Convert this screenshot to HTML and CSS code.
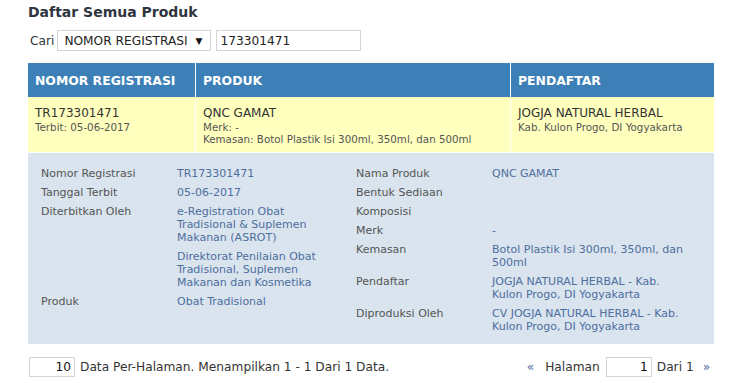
FILE: index.html
```html
<!DOCTYPE html>
<html>
<head>
<meta charset="utf-8">
<link rel="stylesheet" href="styles.css">
</head>
<body>
<div class="page">
  <h1 class="title">Daftar Semua Produk</h1>
  <div class="search">
    <span class="search-label">Cari</span>
    <div class="select"><span>NOMOR REGISTRASI</span><span class="arrow">&#9660;</span></div>
    <div class="input">173301471</div>
  </div>
  <div class="table">
    <div class="thead">
      <div class="th c1">NOMOR REGISTRASI</div>
      <div class="th c2">PRODUK</div>
      <div class="th c3">PENDAFTAR</div>
    </div>
    <div class="trow">
      <div class="td c1">
        <div class="main">TR173301471</div>
        <div class="sub">Terbit: 05-06-2017</div>
      </div>
      <div class="td c2">
        <div class="main">QNC GAMAT</div>
        <div class="sub">Merk: -</div>
        <div class="sub">Kemasan: Botol Plastik Isi 300ml, 350ml, dan 500ml</div>
      </div>
      <div class="td c3">
        <div class="main">JOGJA NATURAL HERBAL</div>
        <div class="sub">Kab. Kulon Progo, DI Yogyakarta</div>
      </div>
    </div>
    <div class="detail">
      <div class="dgrid left">
        <div class="dl">Nomor Registrasi</div><div class="dv">TR173301471</div>
        <div class="dl">Tanggal Terbit</div><div class="dv">05-06-2017</div>
        <div class="dl">Diterbitkan Oleh</div><div class="dv">e-Registration Obat Tradisional &amp; Suplemen Makanan (ASROT)</div>
        <div class="dl"></div><div class="dv">Direktorat Penilaian Obat Tradisional, Suplemen Makanan dan Kosmetika</div>
        <div class="dl">Produk</div><div class="dv">Obat Tradisional</div>
      </div>
      <div class="dgrid right">
        <div class="dl">Nama Produk</div><div class="dv">QNC GAMAT</div>
        <div class="dl">Bentuk Sediaan</div><div class="dv"></div>
        <div class="dl">Komposisi</div><div class="dv"></div>
        <div class="dl">Merk</div><div class="dv">-</div>
        <div class="dl">Kemasan</div><div class="dv">Botol Plastik Isi 300ml, 350ml, dan 500ml</div>
        <div class="dl">Pendaftar</div><div class="dv">JOGJA NATURAL HERBAL - Kab. Kulon Progo, DI Yogyakarta</div>
        <div class="dl">Diproduksi Oleh</div><div class="dv">CV JOGJA NATURAL HERBAL - Kab. Kulon Progo, DI Yogyakarta</div>
      </div>
    </div>
  </div>
  <div class="footer">
    <div class="fleft">
      <div class="num">10</div>
      <span>Data Per-Halaman. Menampilkan 1 - 1 Dari 1 Data.</span>
    </div>
    <div class="fright">
      <span class="nav">&laquo;</span>
      <span class="hal">Halaman</span>
      <div class="num">1</div>
      <span class="dari">Dari 1</span>
      <span class="nav">&raquo;</span>
    </div>
  </div>
</div>
</body>
</html>
```

FILE: styles.css
```css
* { box-sizing: border-box; }
body {
  margin: 0;
  font-family: "DejaVu Sans", Verdana, sans-serif;
  color: #333;
  background: #fff;
}
.page {
  padding: 2px 29px 0 28px;
  width: 743px;
}
.title {
  font-size: 14px;
  font-weight: bold;
  color: #2e3440;
  margin: 0;
  height: 28px;
  line-height: 20px;
}
.search {
  display: flex;
  align-items: center;
  gap: 5px;
  padding-left: 2px;
  font-size: 12.2px;
  height: 21px;
}
.search-label { color: #333; margin-right: -2px; }
.select {
  width: 154px;
  height: 21px;
  border: 1px solid #d4d4d4;
  display: flex;
  align-items: center;
  justify-content: space-between;
  padding: 0 8px 0 6px;
  color: #222;
}
.arrow { font-size: 9px; color: #111; }
.input {
  width: 145px;
  height: 21px;
  border: 1px solid #d4d4d4;
  display: flex;
  align-items: center;
  padding-left: 3px;
  color: #222;
}
.table {
  margin-top: 12px;
  width: 686px;
}
.thead, .trow { display: flex; }
.c1 { width: 167px; }
.c2 { width: 315px; border-left: 1px solid #fff; }
.c3 { flex: 1; border-left: 1px solid #fff; }
.thead { background: #3d80b8; height: 34px; }
.th {
  color: #fff;
  font-weight: bold;
  font-size: 12.4px;
  display: flex;
  align-items: center;
  padding-left: 7px;
}
.trow {
  background: #ffffbe;
  height: 56px;
  border-bottom: 1px solid #fff;
}
.td { padding: 9px 7px 0 7px; }
.main { font-size: 12px; line-height: 15px; color: #333; }
.sub { font-size: 10.3px; line-height: 12px; color: #555; }
.detail {
  background: #d9e4ee;
  display: flex;
  padding: 14px 13px 20px 13px;
  height: 191px;
}
.dgrid {
  display: grid;
  align-content: start;
  row-gap: 6px;
  font-size: 11px;
  line-height: 13px;
}
.left { width: 315px; grid-template-columns: 136px 155px; }
.right { grid-template-columns: 136px 200px; }
.dl { color: #555; }
.dv { color: #4e6e9e; }
.footer {
  display: flex;
  justify-content: space-between;
  align-items: center;
  margin-top: 13px;
  font-size: 12.2px;
  width: 686px;
}
.fleft, .fright { display: flex; align-items: center; gap: 5px; }
.fleft { padding-left: 1px; }
.fright { gap: 5px; }
.num {
  width: 46px;
  height: 20px;
  border: 1px solid #d4d4d4;
  text-align: right;
  padding-right: 3px;
  line-height: 18px;
  color: #111;
}
.nav { color: #4e6e9e; font-size: 12px; padding: 0 4px; }
.hal { margin-right: 1px; margin-left: 2px; }
```
